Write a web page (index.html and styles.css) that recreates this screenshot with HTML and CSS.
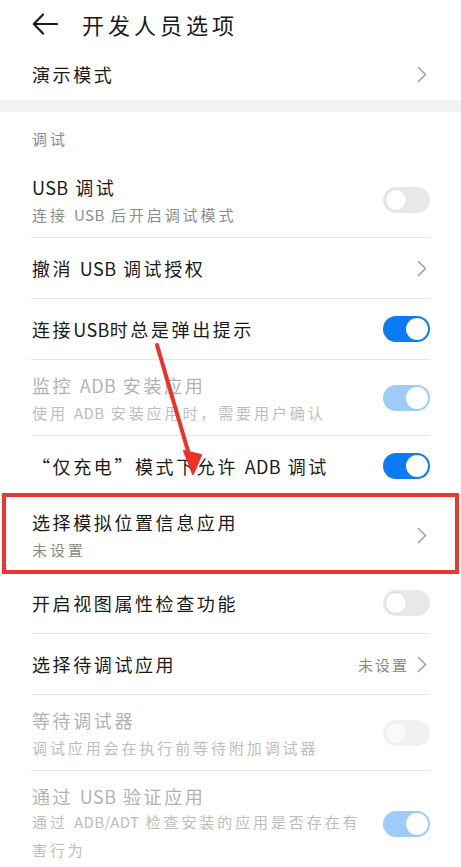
FILE: index.html
```html
<!DOCTYPE html>
<html lang="zh-CN">
<head>
<meta charset="utf-8">
<title>开发人员选项</title>
<link rel="stylesheet" href="styles.css">
</head>
<body>
<div class="screen">
  <header class="topbar">
    <svg class="back" width="26" height="22" viewBox="0 0 26 22"><path d="M25 11H2M11 1.5L1.8 11l9.2 9.5" fill="none" stroke="#1a1a1a" stroke-width="2.2" stroke-linecap="round" stroke-linejoin="round"/></svg>
    <h1 class="title">开发人员选项</h1>
  </header>

  <div class="row single first">
    <div class="text"><div class="label">演示模式</div></div>
    <svg class="chev" width="10" height="17" viewBox="0 0 10 17"><path d="M1.5 1.5L8.5 8.5L1.5 15.5" fill="none" stroke="#a3a3a3" stroke-width="1.6" stroke-linecap="round" stroke-linejoin="round"/></svg>
  </div>

  <div class="band"></div>

  <div class="section">调试</div>

  <div class="row double">
    <div class="text"><div class="label"><span class="lat">USB</span> 调试</div><div class="sub">连接 <span class="lat">USB</span> 后开启调试模式</div></div>
    <span class="toggle off"><span class="knob"></span></span>
  </div>
  <div class="row single">
    <div class="text"><div class="label">撤消 <span class="lat">USB</span> 调试授权</div></div>
    <svg class="chev" width="10" height="17" viewBox="0 0 10 17"><path d="M1.5 1.5L8.5 8.5L1.5 15.5" fill="none" stroke="#a3a3a3" stroke-width="1.6" stroke-linecap="round" stroke-linejoin="round"/></svg>
  </div>
  <div class="row single">
    <div class="text"><div class="label">连接<span class="lat">USB</span>时总是弹出提示</div></div>
    <span class="toggle on"><span class="knob"></span></span>
  </div>
  <div class="row double disabled">
    <div class="text"><div class="label">监控 <span class="lat">ADB</span> 安装应用</div><div class="sub">使用 <span class="lat">ADB</span> 安装应用时，需要用户确认</div></div>
    <span class="toggle on"><span class="knob"></span></span>
  </div>
  <div class="row single">
    <div class="text"><div class="label">“仅充电”模式下允许 <span class="lat">ADB</span> 调试</div></div>
    <span class="toggle on"><span class="knob"></span></span>
  </div>
  <div class="row double highlight">
    <div class="text"><div class="label">选择模拟位置信息应用</div><div class="sub">未设置</div></div>
    <svg class="chev" width="10" height="17" viewBox="0 0 10 17"><path d="M1.5 1.5L8.5 8.5L1.5 15.5" fill="none" stroke="#a3a3a3" stroke-width="1.6" stroke-linecap="round" stroke-linejoin="round"/></svg>
  </div>
  <div class="row single">
    <div class="text"><div class="label">开启视图属性检查功能</div></div>
    <span class="toggle off"><span class="knob"></span></span>
  </div>
  <div class="row single">
    <div class="text"><div class="label">选择待调试应用</div></div>
    <span class="value">未设置</span>
    <svg class="chev" width="10" height="17" viewBox="0 0 10 17"><path d="M1.5 1.5L8.5 8.5L1.5 15.5" fill="none" stroke="#a3a3a3" stroke-width="1.6" stroke-linecap="round" stroke-linejoin="round"/></svg>
  </div>
  <div class="row double disabled">
    <div class="text"><div class="label">等待调试器</div><div class="sub">调试应用会在执行前等待附加调试器</div></div>
    <span class="toggle off"><span class="knob"></span></span>
  </div>
  <div class="row double disabled last">
    <div class="text narrow"><div class="label">通过 <span class="lat">USB</span> 验证应用</div><div class="sub"><span class="line">通过 <span class="lat">ADB/ADT</span> 检查安装的应用是否存在有</span><span class="line">害行为</span></div></div>
    <span class="toggle on"><span class="knob"></span></span>
  </div>

  <svg class="arrow" width="461" height="867" viewBox="0 0 461 867">
    <line x1="157" y1="345" x2="190" y2="458" stroke="#ee2f2a" stroke-width="4" stroke-linecap="round"/>
    <path d="M184 451 L201 455 L193 474 Z" fill="#ee2f2a" stroke="#ee2f2a" stroke-width="2" stroke-linejoin="round"/>
  </svg>
</div>
</body>
</html>
```

FILE: styles.css
```css
* { box-sizing: border-box; }
html, body { margin: 0; padding: 0; background: #ffffff; }
body {
  font-family: "Noto Sans CJK SC", "Noto Sans", sans-serif;
  color: #1a1a1a;
}
.screen {
  position: relative;
  width: 461px;
  height: 867px;
  overflow: hidden;
  background: #fff;
}
.topbar {
  height: 48px;
  display: flex;
  align-items: center;
  padding-left: 32px;
}
.back { flex: none; }
.title {
  margin: 0 0 0 24px;
  font-size: 22px;
  font-weight: 400;
  letter-spacing: 4px;
  line-height: 28px;
  color: #1a1a1a;
}
.row {
  display: flex;
  align-items: center;
  margin: 0 31px 0 31px;
  padding-left: 1px;
  border-bottom: 1px solid #e6e6e6;
}
.row.single { height: 61px; }
.row.first { height: 52px; border-bottom: none; }
.row.double { min-height: 75px; padding-top: 13px; padding-bottom: 12px; }
.text { flex: 1; min-width: 0; }
.text.narrow { flex: none; width: 332px; margin-right: auto; }
.label {
  font-size: 18px;
  line-height: 24px;
  letter-spacing: 2.6px;
  white-space: nowrap;
}
.sub {
  margin-top: 6px;
  font-size: 15px;
  line-height: 20px;
  letter-spacing: 2.9px;
  color: #8c8c8c;
}
.line { display: block; white-space: nowrap; }
.lat { letter-spacing: 0.4px; }
.row.last .sub { line-height: 28px; margin-top: 0; }
.row.last { border-bottom: none; }
.disabled .label { color: #b3b3b3; }
.disabled .sub { color: #bdbdbd; }
.band { height: 12px; background: #f2f2f2; }
.section {
  height: 50px;
  padding: 16px 0 0 32px;
  font-size: 15px;
  line-height: 22px;
  letter-spacing: 3px;
  color: #8a8a8a;
}
.chev { flex: none; margin-left: 8px; margin-right: 3px; }
.value {
  flex: none;
  font-size: 15px;
  letter-spacing: 2px;
  color: #8a8a8a;
}
.toggle {
  flex: none;
  position: relative;
  width: 47px;
  height: 26px;
  border-radius: 13px;
}
.toggle .knob {
  position: absolute;
  top: 2px;
  width: 22px;
  height: 22px;
  border-radius: 50%;
  background: #fff;
}
.toggle.on { background: #0a7bf2; }
.toggle.on .knob { right: 2px; }
.toggle.off { background: #e8e8e8; }
.toggle.off .knob { left: 2px; border: 1px solid #dcdcdc; }
.disabled .toggle.on { background: #9fcbf9; }
.disabled .toggle.off { background: #f1f1f1; }
.disabled .toggle.off .knob { background: #fafafa; border-color: #eeeeee; }
.highlight { position: relative; }
.highlight::before {
  content: "";
  position: absolute;
  left: -29px;
  right: -29px;
  top: -4px;
  bottom: -2px;
  border: 4px solid #ec3631;
  pointer-events: none;
}
.arrow {
  position: absolute;
  left: 0;
  top: 0;
  pointer-events: none;
}
```
